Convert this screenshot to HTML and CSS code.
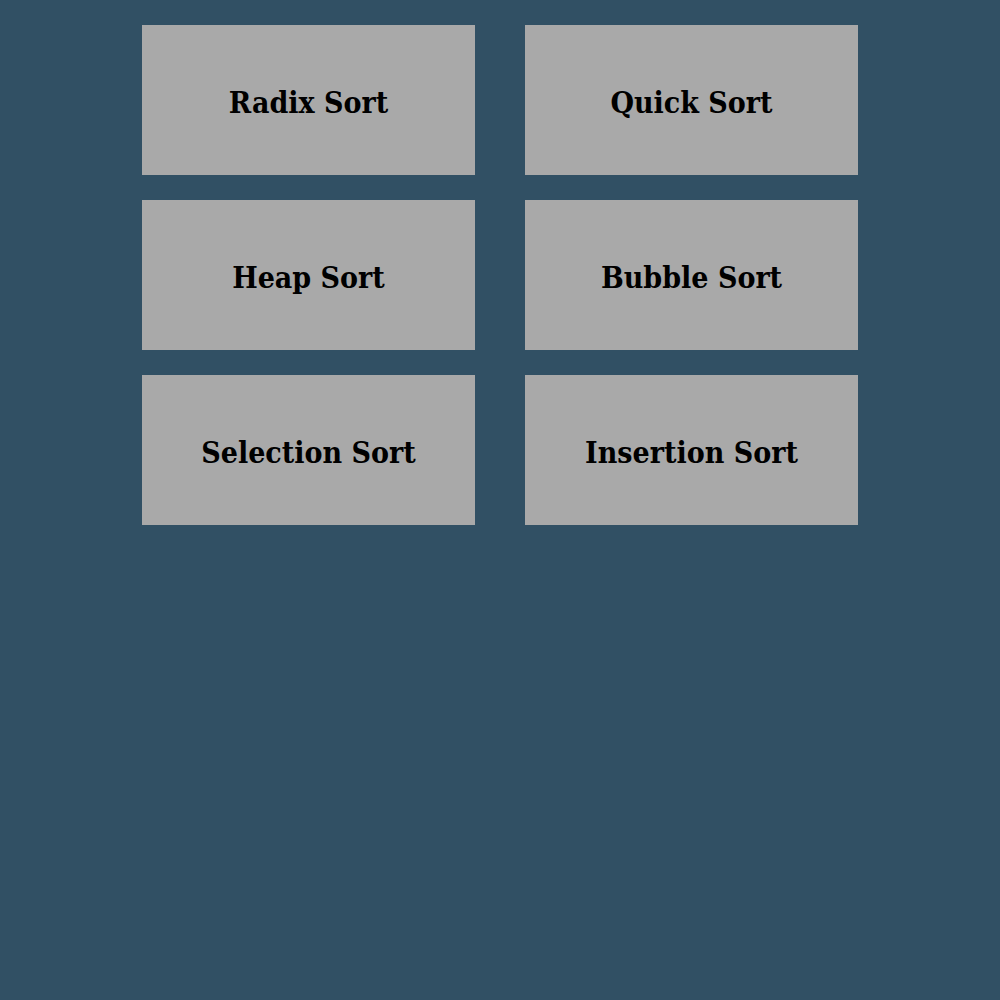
FILE: index.html
```html
<!DOCTYPE html>
<html>
<head>
<meta charset="utf-8">
<link rel="stylesheet" href="styles.css">
</head>
<body>
<div class="grid">
  <div class="card">Radix Sort</div>
  <div class="card">Quick Sort</div>
  <div class="card">Heap Sort</div>
  <div class="card">Bubble Sort</div>
  <div class="card">Selection Sort</div>
  <div class="card">Insertion Sort</div>
</div>
</body>
</html>
```
FILE: styles.css
```css
html, body {
  margin: 0;
  padding: 0;
  background: #315064;
  height: 100%;
}
.grid {
  display: grid;
  grid-template-columns: 333px 333px;
  column-gap: 50px;
  row-gap: 25px;
  justify-content: center;
  padding-top: 25px;
}
.card {
  height: 150px;
  box-sizing: border-box;
  padding-top: 4px;
  background: #a9a9a9;
  display: flex;
  align-items: center;
  justify-content: center;
  font-family: "DejaVu Serif Condensed", "DejaVu Serif", serif;
  font-stretch: condensed;
  font-weight: bold;
  font-size: 30px;
  color: #000;
}
```
